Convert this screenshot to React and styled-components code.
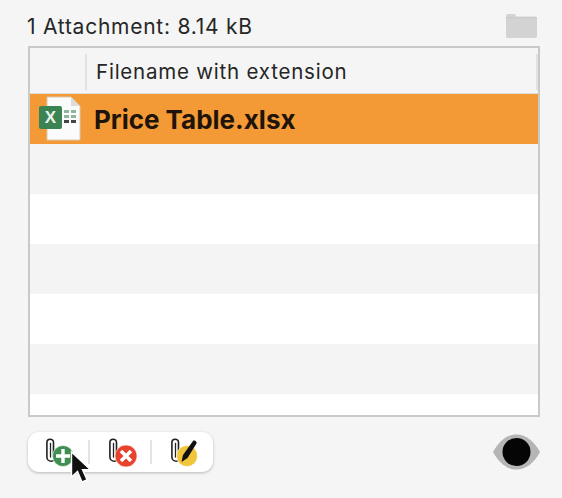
import React from 'react';
import styled, {createGlobalStyle} from 'styled-components';

const GlobalStyle = createGlobalStyle`
html,body {
    margin:0;
    padding:0;
    background:#f5f5f5;
}
`

const Panel = styled.div`
width:562px;
height:498px;
box-sizing:border-box;
padding:0 22px 0 28px;
background:#f5f5f5;
font-family:'Inter','Liberation Sans',sans-serif;
color:#262626;
overflow:hidden;
`

const TitleRow = styled.div`
display:flex;
justify-content:space-between;
align-items:center;
height:46px;
box-sizing:border-box;
padding:6px 3px 0 0;
`

const Title = styled.h1`
margin:0 0 0 -1px;
font-size:21px;
font-weight:400;
letter-spacing:.75px;
`

const TableBox = styled.div`
height:371px;
box-sizing:border-box;
border:2px solid #c9c9c9;
background:#fff;
overflow:hidden;
`

const HeaderRow = styled.div`
display:grid;
grid-template-columns:55px 1fr 2px;
align-items:center;
height:46px;
box-sizing:border-box;
padding-top:2px;
border-bottom:1px solid #dedede;
background:#f5f5f5;
`

const HeaderCell = styled.div`
display:flex;
align-items:center;
height:36px;
padding-left:9px;
font-size:20.5px;
letter-spacing:.78px;
border-left:2px solid #e2e2e2;
`

const HeaderEnd = styled.div`
height:36px;
background:#e2e2e2;
`

const Row = styled.div`
display:grid;
grid-template-columns:56px 1fr;
align-items:center;
height:50px;
background:${props => props.$selected ? '#f39a36' : props.$odd ? '#f4f4f4' : '#fff'};
`

const FileName = styled.div`
padding-left:8px;
font-size:26px;
font-weight:700;
color:#20140a;
`

const IconCell = styled.div`
display:flex;
justify-content:center;
padding-left:6px;
`

const BottomRow = styled.div`
display:flex;
justify-content:space-between;
align-items:center;
margin-top:15px;
`

const Toolbar = styled.div`
position:relative;
display:flex;
align-items:center;
width:185px;
height:40px;
box-sizing:border-box;
padding-left:15px;
border-radius:11px;
background:#fff;
box-shadow:0 1px 3px rgba(0,0,0,.25);
`

const ToolButton = styled.button`
display:flex;
align-items:center;
width:${props => props.$width}px;
height:32px;
padding:0;
border:none;
background:transparent;
`

const Divider = styled.span`
width:2px;
height:24px;
margin-right:16px;
background:#e4e4e4;
`

const Cursor = styled.svg`
position:absolute;
left:42px;
top:19px;
`

const Clip = () => (
    <g fill="none" stroke="#222" strokeWidth="1.6" strokeLinecap="round">
        <path d="M10.500 21V6.500a3.300 3.300 0 0 0-6.600 0V21a4.300 4.300 0 0 0 8.600 0" />
        <path d="M7.500 21V7.500" strokeWidth="1.3" />
    </g>
)

const AddIcon = () => (
    <svg width="32" height="32" viewBox="0 0 32 32">
        <Clip />
        <circle cx="20" cy="20" r="10.500" fill="#3f8f52" stroke="#fff" strokeWidth=".6" />
        <path d="M20 13v14M13 20h14" stroke="#fff" strokeWidth="3.400" />
    </svg>
)

const RemoveIcon = () => (
    <svg width="34" height="32" viewBox="0 0 34 32">
        <Clip />
        <circle cx="20" cy="20" r="11" fill="#e8412c" stroke="#fff" strokeWidth=".6" />
        <path d="M15 15l10 10M25 15l-10 10" stroke="#fff" strokeWidth="3.600" />
    </svg>
)

const EditIcon = () => (
    <svg width="34" height="32" viewBox="0 0 34 32">
        <Clip />
        <circle cx="19" cy="20" r="10.500" fill="#f0c53a" stroke="#fff" strokeWidth=".6" />
        <path d="M13.500 26l1.500-7L25 5c1-1.400 4.500.7 3.500 2.500L19.500 22z" fill="#111" />
    </svg>
)

const ExcelIcon = () => (
    <svg width="44" height="46" viewBox="0 0 44 46">
        <path d="M8 1h24l9 9v34H8z" fill="#fbfbfb" stroke="#d9c9b0" strokeWidth="1" />
        <path d="M32 1v9h9z" fill="#dcdcdc" />
        <rect x="0" y="10" width="23" height="23" rx="2" fill="#3c8354" />
        <text x="11.500" y="27" textAnchor="middle" fontFamily="Liberation Sans" fontSize="17" fontWeight="700" fill="#e9f3ec">X</text>
        <g fill="#8fb59c">
            <rect x="25" y="14" width="5" height="3" />
            <rect x="32" y="14" width="5" height="3" />
            <rect x="25" y="19" width="5" height="3" />
            <rect x="32" y="19" width="5" height="3" />
        </g>
        <g fill="#444">
            <rect x="25" y="24" width="5" height="3" />
            <rect x="32" y="24" width="5" height="3" />
        </g>
    </svg>
)

const FolderIcon = () => (
    <svg width="31" height="24" viewBox="0 0 31 24">
        <path d="M0 2.500C0 1 .8 0 2 0h6c1 0 1.500.6 2 2.500h19c1.200 0 2 .8 2 2V22c0 1.200-.8 2-2 2H2c-1.200 0-2-.8-2-2z" fill="#d3d3d3" />
        <rect x="0" y="3" width="31" height="1.500" fill="#cbcbcb" />
    </svg>
)

const EyeIcon = () => (
    <svg width="47" height="36" viewBox="0 0 47 36">
        <path d="M0 18C6 7 14 .5 23.500.5S41 7 47 18c-6 11-14 17.500-23.500 17.500S6 29 0 18z" fill="#b5b5b5" />
        <circle cx="23.500" cy="18" r="14" fill="#050505" />
    </svg>
)

const rows = [true,false,true,false,true,false];

const App = () => {
    return (
        <Panel>
            <GlobalStyle />
            <TitleRow>
                <Title>1 Attachment: 8.14 kB</Title>
                <FolderIcon />
            </TitleRow>
            <TableBox>
                <HeaderRow>
                    <div></div>
                    <HeaderCell>Filename with extension</HeaderCell>
                    <HeaderEnd />
                </HeaderRow>
                <Row $selected>
                    <IconCell><ExcelIcon /></IconCell>
                    <FileName>Price Table.xlsx</FileName>
                </Row>
                {rows.map((odd,i) => <Row key={i} $odd={odd} />)}
            </TableBox>
            <BottomRow>
                <Toolbar>
                    <ToolButton $width={45}><AddIcon /></ToolButton>
                    <Divider />
                    <ToolButton $width={44}><RemoveIcon /></ToolButton>
                    <Divider />
                    <ToolButton $width={34}><EditIcon /></ToolButton>
                    <Cursor width="22" height="34" viewBox="0 0 22 34">
                        <path d="M1.500 1v25l6-5.500 4.500 10.500 5-2.200-4.500-10h8z" fill="#111" stroke="#fff" strokeWidth="1.400" />
                    </Cursor>
                </Toolbar>
                <EyeIcon />
            </BottomRow>
        </Panel>
    )
}

export default App;
